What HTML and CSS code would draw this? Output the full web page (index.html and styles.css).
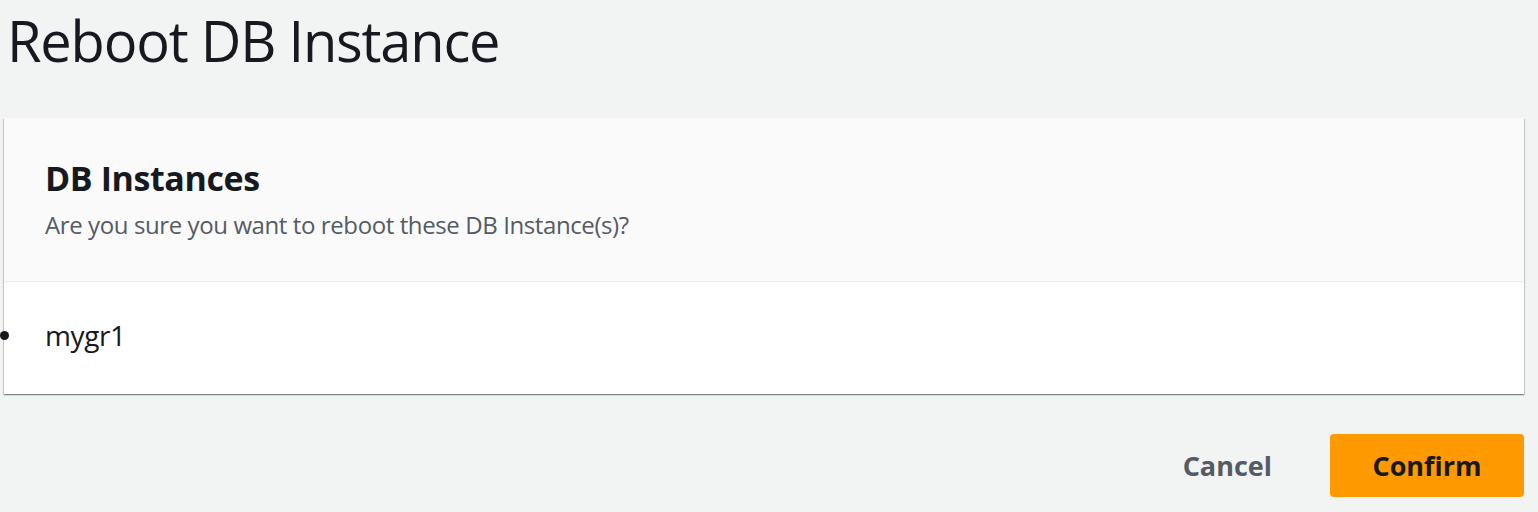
FILE: index.html
```html
<!DOCTYPE html>
<html lang="en">
<head>
    <meta charset="UTF-8">
    <meta name="viewport" content="width=device-width, initial-scale=1.0">
    <title>Reboot DB Instance</title>
    <link rel="stylesheet" href="styles.css">
</head>
<body>
    <div class="page">
        <h1 class="page-title">Reboot DB Instance</h1>

        <div class="card">
            <div class="card-header">
                <h2 class="card-title">DB Instances</h2>
                <p class="card-desc">Are you sure you want to reboot these DB Instance(s)?</p>
            </div>
            <div class="card-body">
                <ul class="instance-list">
                    <li class="instance">mygr1</li>
                </ul>
            </div>
        </div>

        <div class="actions">
            <button class="btn btn-link">Cancel</button>
            <button class="btn btn-primary">Confirm</button>
        </div>
    </div>
</body>
</html>
```

FILE: styles.css
```css
body {
    margin: 0;
    background: #f2f3f3;
    font-family: "Open Sans", "Noto Sans", Arial, sans-serif;
    color: #16191f;
}

.page {
    padding: 0 14px 0 4px;
}

.page-title {
    margin: 12px 0 50px 3px;
    font-size: 56px;
    line-height: 56px;
    font-weight: 400;
    letter-spacing: -1.2px;
}

.card {
    position: relative;
    background: #fff;
    box-shadow: 0 1px 1px 0 rgba(0, 28, 36, 0.3),
                1px 1px 1px 0 rgba(0, 28, 36, 0.15),
                -1px 1px 1px 0 rgba(0, 28, 36, 0.15);
}

.card-header {
    background: #fafafa;
    border-bottom: 1px solid #eaeded;
    padding: 43px 40px 44px 41px;
}

.card-title {
    margin: 0 0 18px;
    font-size: 34px;
    line-height: 34px;
    font-weight: 700;
    letter-spacing: -0.4px;
}

.card-desc {
    margin: 0;
    font-size: 24px;
    line-height: 24px;
    color: #545b64;
    letter-spacing: -0.4px;
}

.card-body {
    padding: 39px 40px 45px 41px;
}

.instance-list {
    list-style: none;
    margin: 0;
    padding: 0;
}

.instance {
    font-size: 28px;
    line-height: 28px;
    font-weight: 500;
    letter-spacing: -0.4px;
}

/* list marker sits on the card's left edge */
.instance::before {
    content: "";
    position: absolute;
    left: -4px;
    margin-top: 10px;
    width: 9px;
    height: 9px;
    border-radius: 50%;
    background: #16191f;
}

.actions {
    display: flex;
    justify-content: flex-end;
    align-items: center;
    gap: 14px;
    margin-top: 40px;
}

.btn {
    font-family: inherit;
    font-size: 27px;
    font-weight: 700;
    border: none;
    border-radius: 4px;
    height: 63px;
    cursor: pointer;
}

.btn-link {
    background: transparent;
    color: #545b64;
    padding: 0 44px;
}

.btn-primary {
    background: #ff9900;
    color: #16191f;
    width: 194px;
    padding: 0;
}
```
